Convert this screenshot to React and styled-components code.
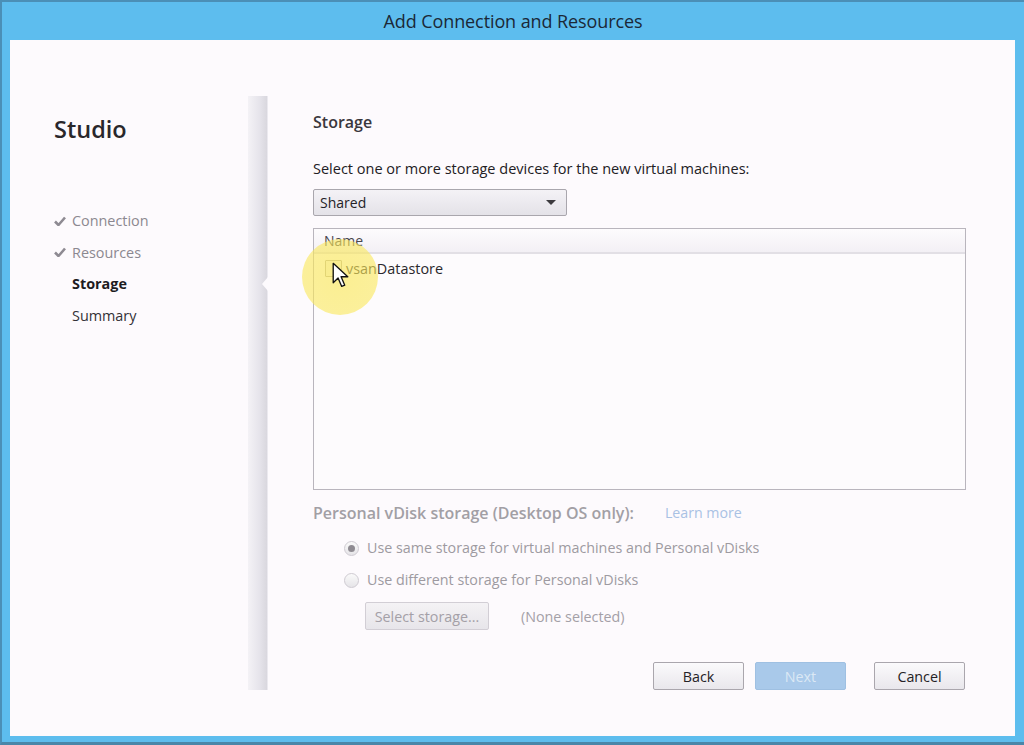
import styled, { createGlobalStyle } from "styled-components"

const GlobalStyle = createGlobalStyle`
    html, body {
        margin: 0;
        padding: 0;
        background: #5cbcec;
    }
    * {
        box-sizing: border-box;
    }
`

const Frame = styled.div`
    width: 1024px;
    height: 745px;
    display: flex;
    flex-direction: column;
    background: #5dbdee;
    border-top: 2px solid #4b8fb6;
    border-bottom: 3px solid #4a86a8;
    border-left: 2px solid #4b8fb6;
    font-family: "Open Sans", "Noto Sans", sans-serif;
    overflow: hidden;
`
const TitleBar = styled.div`
    height: 38px;
    display: flex;
    align-items: center;
    justify-content: center;
    font-size: 18px;
    color: #1b2837;
    letter-spacing: -0.1px;
`
const Body = styled.div`
    flex: 1;
    display: flex;
    margin: 0 9px 6px 8px;
    background: #fdfafd;
`
const Sidebar = styled.div`
    width: 238px;
    padding: 74px 0 0 44px;
`
const Brand = styled.div`
    font-size: 23.5px;
    font-weight: 600;
    color: #29272b;
    line-height: 30px;
    margin-bottom: 61px;
`
const Steps = styled.div`
    display: flex;
    flex-direction: column;
`
const Step = styled.div`
    display: flex;
    align-items: center;
    height: 31.5px;
    font-size: 14.4px;
    font-weight: ${p => p.active ? 700 : 400};
    color: ${p => p.done ? "#8c8890" : p.active ? "#1d1b1f" : "#333036"};
`
const CheckSlot = styled.span`
    width: 18px;
    display: flex;
    align-items: center;
`
const Divider = styled.div`
    width: 20px;
    margin: 56px 0 46px;
    position: relative;
    background: linear-gradient(to right, #f4f2f6 0%, #e6e4eb 60%, #d9d7de 100%);
    border-right: 1px solid #ebe9ef;
    &::after {
        content: "";
        position: absolute;
        right: -1px;
        top: 181px;
        border-top: 7px solid transparent;
        border-bottom: 7px solid transparent;
        border-right: 6px solid #fdfafd;
    }
`
const Main = styled.div`
    flex: 1;
    display: flex;
    flex-direction: column;
    padding: 72px 49px 0 45px;
`
const SectionTitle = styled.div`
    font-size: 16px;
    font-weight: 600;
    color: #3a373c;
    line-height: 20px;
`
const Instruction = styled.div`
    margin-top: 27px;
    font-size: 14.5px;
    color: #222024;
    line-height: 20px;
`
const Dropdown = styled.div`
    margin-top: 10px;
    width: 254px;
    height: 27px;
    display: flex;
    align-items: center;
    justify-content: space-between;
    padding: 0 10px 0 6px;
    border: 1px solid #a9a6ad;
    border-radius: 2px;
    background: linear-gradient(#f4f2f6, #e4e2e8);
    font-size: 14px;
    color: #242226;
`
const Caret = styled.span`
    width: 0;
    height: 0;
    border-left: 5px solid transparent;
    border-right: 5px solid transparent;
    border-top: 5px solid #3c3a3e;
`
const ListBox = styled.div`
    margin-top: 12px;
    height: 262px;
    border: 1px solid #b9b5bd;
    background: #fdfbfd;
    position: relative;
`
const ListHeader = styled.div`
    height: 25px;
    display: flex;
    align-items: center;
    padding-left: 10px;
    border-bottom: 2px solid #e2dfe5;
    background: linear-gradient(#fdfbfd, #f3f0f5);
    font-size: 14px;
    color: #49464c;
`
const ListRow = styled.div`
    height: 28px;
    display: flex;
    align-items: center;
    padding-left: 11px;
    font-size: 14.4px;
    color: #2a282c;
    gap: 4px;
`
const Checkbox = styled.span`
    width: 17px;
    height: 17px;
    border: 1px solid #b8b2a2;
    background: #f6f3ec;
    border-radius: 1px;
`
const Highlight = styled.div`
    position: absolute;
    left: -12px;
    top: 10px;
    width: 76px;
    height: 76px;
    border-radius: 50%;
    background: radial-gradient(circle, rgba(250, 232, 90, 0.66) 0%, rgba(250, 232, 90, 0.6) 75%, rgba(250, 236, 120, 0.3) 100%);
    pointer-events: none;
`
const Cursor = styled.svg`
    position: absolute;
    left: 18px;
    top: 33px;
`
const PvdTitle = styled.div`
    margin-top: 13px;
    display: flex;
    align-items: center;
    gap: 31px;
    font-size: 16px;
    font-weight: 600;
    color: #a29fa5;
    line-height: 20px;
`
const LearnMore = styled.span`
    font-size: 14.2px;
    font-weight: 400;
    color: #a9c1e4;
`
const RadioRow = styled.label`
    margin-top: ${p => p.first ? 15 : 12}px;
    display: flex;
    align-items: center;
    gap: 8px;
    padding-left: 31px;
    font-size: 14.3px;
    color: #9e9aa1;
    line-height: 20px;
`
const Radio = styled.span`
    width: 15px;
    height: 15px;
    border-radius: 50%;
    border: 1px solid #cfcbd2;
    background: linear-gradient(#fafafa, #e6e4e8);
    display: flex;
    align-items: center;
    justify-content: center;
    &::after {
        content: "";
        width: 7px;
        height: 7px;
        border-radius: 50%;
        background: ${p => p.checked ? "#8f8b92" : "transparent"};
    }
`
const SelectRow = styled.div`
    margin-top: 12px;
    display: flex;
    align-items: center;
    gap: 32px;
    padding-left: 52px;
    font-size: 14.3px;
    color: #a4a0a7;
`
const Button = styled.button`
    width: ${p => p.wide ? 124 : 91}px;
    height: 28px;
    font-family: inherit;
    font-size: 14.3px;
    padding: 0;
    border-radius: 2px;
    border: 1px solid ${p => p.primary ? "#9fc0e2" : p.disabled ? "#d2ced5" : "#aaa6ad"};
    background: ${p => p.primary ? "#a9c9ea" : p.disabled ? "linear-gradient(#f4f2f5, #e7e5ea)" : "linear-gradient(#fbfafc, #e9e7ec)"};
    color: ${p => p.primary ? "#dbe8f5" : p.disabled ? "#a4a0a7" : "#242226"};
`
const ButtonBar = styled.div`
    margin-top: 32px;
    padding-right: 1px;
    display: flex;
    justify-content: flex-end;
    gap: 11px;
    & > :last-child {
        margin-left: 17px;
    }
`

function Check() {
    return (
        <svg width="12" height="10" viewBox="0 0 12 10">
            <path d="M1 5.5 L4.5 9 L11 1.5" fill="none" stroke="#8e8a92" strokeWidth="2.6" strokeLinejoin="round" />
        </svg>
    )
}

const steps = [
    { label: "Connection", done: true },
    { label: "Resources", done: true },
    { label: "Storage", active: true },
    { label: "Summary" },
]

export default function App() {
    return (
        <>
            <GlobalStyle />
            <Frame>
                <TitleBar>Add Connection and Resources</TitleBar>
                <Body>
                    <Sidebar>
                        <Brand>Studio</Brand>
                        <Steps>
                            {steps.map(s => (
                                <Step key={s.label} done={s.done} active={s.active}>
                                    <CheckSlot>{s.done && <Check />}</CheckSlot>
                                    {s.label}
                                </Step>
                            ))}
                        </Steps>
                    </Sidebar>
                    <Divider />
                    <Main>
                        <SectionTitle>Storage</SectionTitle>
                        <Instruction>Select one or more storage devices for the new virtual machines:</Instruction>
                        <Dropdown>
                            Shared
                            <Caret />
                        </Dropdown>
                        <ListBox>
                            <ListHeader>Name</ListHeader>
                            <ListRow>
                                <Checkbox />
                                vsanDatastore
                            </ListRow>
                            <Highlight />
                            <Cursor width="17" height="27" viewBox="0 0 14 22">
                                <path d="M1 1 L1 17 L5 13 L8 20 L10.5 19 L7.5 12 L13 12 Z" fill="#fff" stroke="#111" strokeWidth="1.1" strokeLinejoin="round" />
                            </Cursor>
                        </ListBox>
                        <PvdTitle>
                            Personal vDisk storage (Desktop OS only):
                            <LearnMore>Learn more</LearnMore>
                        </PvdTitle>
                        <RadioRow first>
                            <Radio checked />
                            Use same storage for virtual machines and Personal vDisks
                        </RadioRow>
                        <RadioRow>
                            <Radio />
                            Use different storage for Personal vDisks
                        </RadioRow>
                        <SelectRow>
                            <Button wide disabled>Select storage...</Button>
                            (None selected)
                        </SelectRow>
                        <ButtonBar>
                            <Button>Back</Button>
                            <Button primary>Next</Button>
                            <Button>Cancel</Button>
                        </ButtonBar>
                    </Main>
                </Body>
            </Frame>
        </>
    )
}
